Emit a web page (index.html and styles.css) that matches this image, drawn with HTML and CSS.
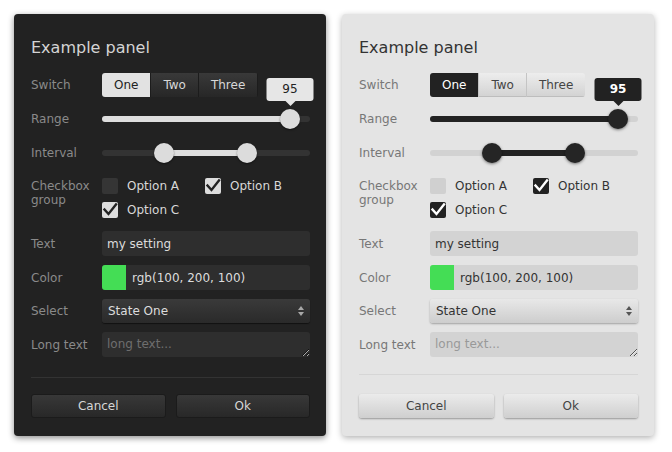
FILE: index.html
```html
<!DOCTYPE html>
<html>
<head>
<meta charset="utf-8">
<link rel="stylesheet" href="styles.css">
</head>
<body>
<div class="page">
  <section class="panel dark">
    <h1 class="title">Example panel</h1>
    <div class="rows">
      <div class="row">
        <span class="label">Switch</span>
        <div class="control">
          <div class="switch"><span class="seg active">One</span><span class="seg">Two</span><span class="seg">Three</span></div>
        </div>
      </div>
      <div class="row">
        <span class="label">Range</span>
        <div class="control slider">
          <div class="track"><div class="fill" style="left:0;width:188px"></div></div>
          <div class="thumb" style="left:178px"><div class="tip">95</div></div>
        </div>
      </div>
      <div class="row">
        <span class="label">Interval</span>
        <div class="control slider">
          <div class="track"><div class="fill" style="left:62px;width:83px"></div></div>
          <div class="thumb" style="left:52px"></div>
          <div class="thumb" style="left:135px"></div>
        </div>
      </div>
      <div class="row group">
        <span class="label">Checkbox group</span>
        <div class="control options">
          <label class="opt"><span class="box"></span>Option A</label>
          <label class="opt"><span class="box on"><svg viewBox="0 0 16 16"><path d="M2.5 7.5 L6.5 12 L14 2.5"/></svg></span>Option B</label>
          <label class="opt"><span class="box on"><svg viewBox="0 0 16 16"><path d="M2.5 7.5 L6.5 12 L14 2.5"/></svg></span>Option C</label>
        </div>
      </div>
      <div class="row">
        <span class="label">Text</span>
        <div class="control"><input class="field" type="text" value="my setting"></div>
      </div>
      <div class="row">
        <span class="label">Color</span>
        <div class="control"><div class="field color"><span class="swatch"></span><span>rgb(100, 200, 100)</span></div></div>
      </div>
      <div class="row">
        <span class="label">Select</span>
        <div class="control"><div class="select"><span>State One</span><svg class="arrows" viewBox="0 0 6 10"><path d="M0 4 L3 0 L6 4 Z M0 6 L3 10 L6 6 Z"/></svg></div></div>
      </div>
      <div class="row">
        <span class="label">Long text</span>
        <div class="control"><textarea class="field area" placeholder="long text..."></textarea></div>
      </div>
    </div>
    <div class="sep"></div>
    <div class="actions">
      <button class="btn">Cancel</button>
      <button class="btn">Ok</button>
    </div>
  </section>

  <section class="panel light">
    <h1 class="title">Example panel</h1>
    <div class="rows">
      <div class="row">
        <span class="label">Switch</span>
        <div class="control">
          <div class="switch"><span class="seg active">One</span><span class="seg">Two</span><span class="seg">Three</span></div>
        </div>
      </div>
      <div class="row">
        <span class="label">Range</span>
        <div class="control slider">
          <div class="track"><div class="fill" style="left:0;width:188px"></div></div>
          <div class="thumb" style="left:178px"><div class="tip">95</div></div>
        </div>
      </div>
      <div class="row">
        <span class="label">Interval</span>
        <div class="control slider">
          <div class="track"><div class="fill" style="left:62px;width:83px"></div></div>
          <div class="thumb" style="left:52px"></div>
          <div class="thumb" style="left:135px"></div>
        </div>
      </div>
      <div class="row group">
        <span class="label">Checkbox group</span>
        <div class="control options">
          <label class="opt"><span class="box"></span>Option A</label>
          <label class="opt"><span class="box on"><svg viewBox="0 0 16 16"><path d="M2.5 7.5 L6.5 12 L14 2.5"/></svg></span>Option B</label>
          <label class="opt"><span class="box on"><svg viewBox="0 0 16 16"><path d="M2.5 7.5 L6.5 12 L14 2.5"/></svg></span>Option C</label>
        </div>
      </div>
      <div class="row">
        <span class="label">Text</span>
        <div class="control"><input class="field" type="text" value="my setting"></div>
      </div>
      <div class="row">
        <span class="label">Color</span>
        <div class="control"><div class="field color"><span class="swatch"></span><span>rgb(100, 200, 100)</span></div></div>
      </div>
      <div class="row">
        <span class="label">Select</span>
        <div class="control"><div class="select"><span>State One</span><svg class="arrows" viewBox="0 0 6 10"><path d="M0 4 L3 0 L6 4 Z M0 6 L3 10 L6 6 Z"/></svg></div></div>
      </div>
      <div class="row">
        <span class="label">Long text</span>
        <div class="control"><textarea class="field area" placeholder="long text..."></textarea></div>
      </div>
    </div>
    <div class="sep"></div>
    <div class="actions">
      <button class="btn">Cancel</button>
      <button class="btn">Ok</button>
    </div>
  </section>
</div>
</body>
</html>
```

FILE: styles.css
```css
* { box-sizing: border-box; }
body {
  margin: 0;
  background: #ffffff;
  font-family: "DejaVu Sans", sans-serif;
  font-size: 12px;
}
.page {
  display: flex;
  gap: 16px;
  padding: 14px;
}
.panel {
  width: 312px;
  height: 422px;
  border-radius: 4px;
  padding: 24px 16px 18px 17px;
  display: flex;
  flex-direction: column;
}
.title {
  margin: 0;
  font-size: 16px;
  font-weight: normal;
  line-height: 20px;
}
.rows {
  margin-top: 15px;
  display: flex;
  flex-direction: column;
  gap: 9px;
}
.row {
  display: flex;
  align-items: center;
}
.label {
  width: 71px;
  flex: none;
  font-size: 12px;
  line-height: 14px;
}
.row.group { align-items: flex-start; }
.row.group .label { padding-top: 5px; }
.control {
  flex: 1;
  min-width: 0;
  position: relative;
}

/* switch */
.switch {
  display: inline-flex;
  height: 24px;
  border-radius: 3px;
  overflow: hidden;
}
.seg {
  padding: 0 12px;
  line-height: 24px;
  font-size: 12px;
}

/* sliders */
.slider { height: 25px; }
.track {
  position: absolute;
  left: 0; right: 0;
  top: 10px;
  height: 6px;
  border-radius: 3px;
}
.fill {
  position: absolute;
  top: 0; bottom: 0;
  border-radius: 3px;
}
.thumb {
  position: absolute;
  top: 3px;
  width: 20px;
  height: 20px;
  border-radius: 50%;
}
.tip {
  position: absolute;
  left: 50%;
  bottom: 28px;
  transform: translateX(-50%);
  width: 47px;
  height: 23px;
  border-radius: 3px;
  text-align: center;
  line-height: 23px;
  font-size: 12px;
}
.tip::after {
  content: "";
  position: absolute;
  left: 50%;
  top: 100%;
  margin-left: -5px;
  border: 5px solid transparent;
  border-bottom: 0;
}

/* checkboxes */
.options {
  display: grid;
  grid-template-columns: 103px 103px;
}
.opt {
  display: flex;
  align-items: center;
  gap: 9px;
  height: 24px;
  font-size: 12px;
  white-space: nowrap;
}
.box {
  width: 16px;
  height: 16px;
  border-radius: 2px;
  flex: none;
  display: block;
}
.box svg {
  display: block;
  width: 16px;
  height: 16px;
  fill: none;
  stroke-width: 2.4;
  stroke-linecap: square;
}

/* fields */
.field {
  display: block;
  width: 100%;
  height: 25px;
  border: 0;
  border-radius: 3px;
  padding: 0 5px;
  font-family: "DejaVu Sans", sans-serif;
  font-size: 12px;
  outline: none;
}
.color {
  display: flex;
  align-items: center;
  padding: 0;
  overflow: hidden;
  gap: 6px;
}
.swatch {
  width: 24px;
  height: 100%;
  background: #44dd55;
}
.select {
  height: 24px;
  border-radius: 3px;
  display: flex;
  align-items: center;
  justify-content: space-between;
  padding: 0 6px 0 6px;
  font-size: 12px;
}
.arrows {
  width: 6px;
  height: 10px;
}
.area {
  resize: vertical;
  padding: 5px 5px 0;
  line-height: 15px;
}

.sep {
  margin-top: 20px;
  height: 1px;
}
.actions {
  margin-top: 16px;
  display: flex;
  gap: 10px;
}
.btn {
  flex: 1;
  height: 24px;
  border-radius: 3px;
  font-family: "DejaVu Sans", sans-serif;
  font-size: 12px;
  padding: 0;
}

/* dark theme */
.dark {
  background: #222222;
  box-shadow: 0 2px 6px rgba(0,0,0,0.45);
}
.dark .title { color: #d4d4d4; }
.dark .label { color: #8a8a8a; }
.dark .seg {
  color: #d8d8d8;
  background: linear-gradient(#393939, #272727);
  border-left: 1px solid #1c1c1c;
}
.dark .seg:last-child { border-right: 1px solid #1c1c1c; }
.dark .seg.active {
  background: #e2e2e2;
  color: #222;
  border-left: 0;
}
.dark .track { background: #333333; }
.dark .fill { background: #dedede; }
.dark .thumb {
  background: #dcdcdc;
  box-shadow: 0 1px 2px rgba(0,0,0,0.5);
}
.dark .tip { background: #e6e6e6; color: #222; }
.dark .tip::after { border-top-color: #e6e6e6; }
.dark .opt { color: #d8d8d8; }
.dark .box { background: #353535; }
.dark .box.on { background: #dddddd; }
.dark .box svg { stroke: #222; }
.dark .field { background: #2e2e2e; color: #dcdcdc; }
.dark .area::placeholder { color: #6e6e6e; }
.dark .select {
  background: linear-gradient(#3a3a3a, #2a2a2a);
  color: #dcdcdc;
  box-shadow: 0 1px 1px rgba(0,0,0,0.5);
}
.dark .arrows { fill: #a8a8a8; }
.dark .sep { background: #333333; }
.dark .btn {
  background: linear-gradient(#383838, #282828);
  border: 1px solid #1b1b1b;
  color: #d6d6d6;
}

/* light theme */
.light {
  background: #e4e4e4;
  box-shadow: 0 2px 6px rgba(0,0,0,0.3);
}
.light .title { color: #333333; }
.light .label { color: #777777; }
.light .seg {
  color: #444;
  background: linear-gradient(#ededed, #d2d2d2);
  border-left: 1px solid #c4c4c4;
  box-shadow: inset 0 -1px 0 #bdbdbd;
}
.light .seg.active {
  background: #222222;
  color: #ffffff;
  border-left: 0;
  box-shadow: none;
}
.light .track { background: #d2d2d2; }
.light .fill { background: #222222; }
.light .thumb {
  background: #252525;
  box-shadow: 0 1px 3px rgba(0,0,0,0.5);
}
.light .tip { background: #222222; color: #fff; font-weight: bold; }
.light .tip::after { border-top-color: #222222; }
.light .opt { color: #333333; }
.light .box { background: #d0d0d0; }
.light .box.on { background: #222222; }
.light .box svg { stroke: #ffffff; }
.light .field { background: #d3d3d3; color: #333; }
.light .area::placeholder { color: #999999; }
.light .select {
  background: linear-gradient(#e8e8e8, #cdcdcd);
  color: #333;
  box-shadow: 0 1px 2px rgba(0,0,0,0.3);
}
.light .arrows { fill: #555; }
.light .sep {
  margin-top: 17px;
  height: 2px;
  background: #d6d6d6;
}
.light .actions { margin-top: 19px; }
.light .btn {
  background: linear-gradient(#ebebeb, #cfcfcf);
  border: 0;
  box-shadow: 0 1px 2px rgba(0,0,0,0.35);
  color: #444;
}
```
